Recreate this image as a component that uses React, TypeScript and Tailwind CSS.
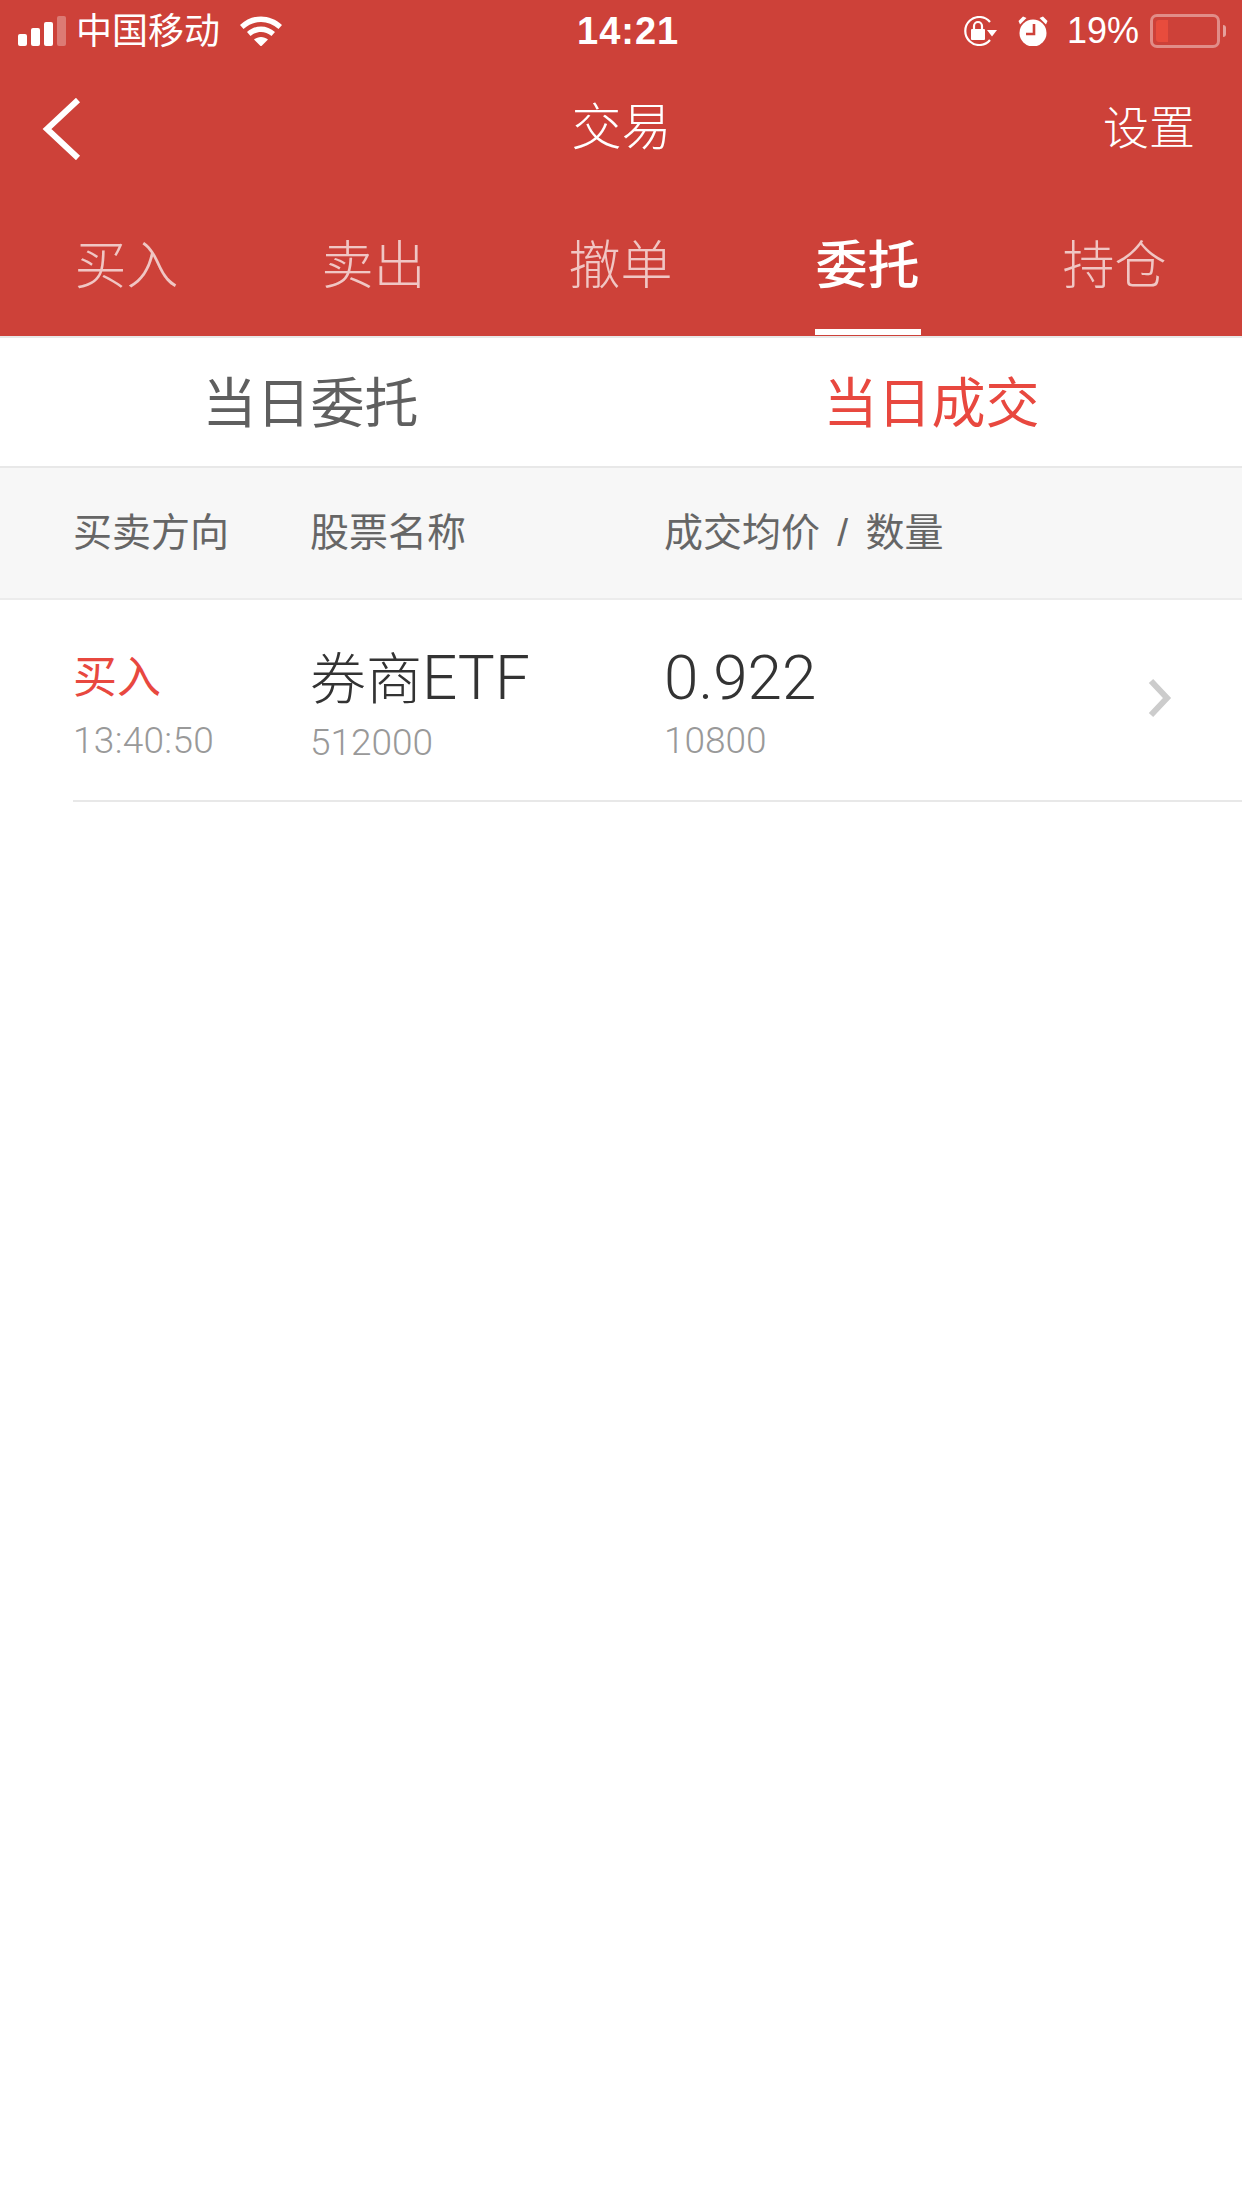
const Tabs = ["买入", "卖出", "撤单", "委托", "持仓"];

function Signal() {
  return (
    <div className="flex items-end gap-[4px] h-[30px]">
      <div className="w-[9px] h-[12px] rounded-[2px] bg-white" />
      <div className="w-[9px] h-[18px] rounded-[2px] bg-white" />
      <div className="w-[9px] h-[24px] rounded-[2px] bg-white" />
      <div className="w-[9px] h-[30px] rounded-[2px] bg-white/30" />
    </div>
  );
}

function Wifi() {
  return (
    <svg width="42" height="30" viewBox="0 0 42 30">
      <path d="M0 9 C12 -2.5 30 -2.5 42 9 L38.5 13 C28 3.5 14 3.5 3.5 13 Z" fill="#fff" />
      <path d="M7 16 C15 8.5 27 8.5 35 16 L31.5 20 C25 14.5 17 14.5 10.5 20 Z" fill="#fff" />
      <path d="M14 23.5 C18 20 24 20 28 23.5 L21 30.5 Z" fill="#fff" />
    </svg>
  );
}

function RotationLock() {
  return (
    <svg width="34" height="30" viewBox="0 0 34 30">
      <path d="M27 6 A14 14 0 1 0 27 24" fill="none" stroke="#fff" strokeWidth="2.2" />
      <path d="M24 14 L34 14 L29 20.5 Z" fill="#fff" />
      <rect x="8" y="13" width="14" height="11" rx="1" fill="#fff" />
      <path d="M11 13 V10 A4 4 0 0 1 19 10 V13" fill="none" stroke="#fff" strokeWidth="2.2" />
    </svg>
  );
}

function Alarm() {
  return (
    <svg width="30" height="30" viewBox="0 0 30 30">
      <ellipse cx="15" cy="17" rx="13.5" ry="13.5" fill="#fff" />
      <path d="M0.5 5 L5 0.5 L8.5 2 L2 8.5 Z" fill="#fff" />
      <path d="M29.5 5 L25 0.5 L21.5 2 L28 8.5 Z" fill="#fff" />
      <path d="M16 8 V18 H8" fill="none" stroke="#cd4139" strokeWidth="2.6" />
    </svg>
  );
}

function Battery() {
  return (
    <div className="flex items-center gap-[3px]">
      <div className="w-[70px] h-[34px] rounded-[7px] border-[3px] border-white/40 p-[3px] flex">
        <div className="w-[12px] h-full rounded-l-[3px] bg-[#e84c3d]" />
      </div>
      <div className="w-[3px] h-[12px] rounded-r-[3px] bg-white/50" />
    </div>
  );
}

export default function App() {
  return (
    <div className="w-[1242px] h-[2208px] bg-white flex flex-col overflow-hidden [font-family:'Liberation_Sans','Noto_Sans_CJK_SC',sans-serif]">
      <header className="bg-[#cd4139] h-[336px] flex flex-col text-white">
        <div className="h-[62px] flex items-center pl-[18px] pr-[16px]">
          <div className="w-[559px] flex items-center">
            <Signal />
            <span className="ml-[10px] pt-[2px] text-[36px] leading-[40px]">中国移动</span>
            <span className="ml-[20px] flex"><Wifi /></span>
          </div>
          <span className="w-[102px] text-center text-[38px] leading-[40px] font-bold tracking-[1px]">14:21</span>
          <div className="flex-1 flex items-center justify-end">
            <RotationLock />
            <span className="ml-[21px] flex"><Alarm /></span>
            <span className="ml-[19px] text-[36px] leading-[40px]">19%</span>
            <span className="ml-[11px] flex"><Battery /></span>
          </div>
        </div>
        <div className="h-[128px] flex items-start justify-between pt-[38px] pl-[42px] pr-[47px]">
          <svg width="40" height="62" viewBox="0 0 40 62" className="-mt-[2px]">
            <path d="M36 2 L5 31 L36 60" fill="none" stroke="#fff" strokeWidth="6" />
          </svg>
          <span className="ml-[58px] text-[50px] leading-[56px] font-light">交易</span>
          <span className="text-[46px] leading-[56px] font-light">设置</span>
        </div>
        <nav className="flex-1 flex pl-[3px]">
          {Tabs.map((t) => (
            <div key={t} className="w-[247px] flex justify-center">
              <div
                className={
                  t === "委托"
                    ? "w-[106px] h-[145px] pt-[44px] text-center text-[52px] leading-[64px] font-medium text-white border-b-[6px] border-white"
                    : "w-[106px] h-[145px] pt-[44px] text-center text-[52px] leading-[64px] font-light text-white/70"
                }
              >
                {t}
              </div>
            </div>
          ))}
        </nav>
      </header>
      <div className="h-[132px] flex border-t-2 border-b-2 border-[#e8e8e8] items-center pt-[4px]">
        <div className="w-[621px] text-center text-[54px] leading-[64px] text-[#5f5f5f]">当日委托</div>
        <div className="w-[621px] text-center text-[54px] leading-[64px] text-[#e8483f]">当日成交</div>
      </div>
      <div className="h-[132px] bg-[#f7f7f7] flex items-center border-b-2 border-[#ececec] text-[39px] leading-[48px] text-[#666666]">
        <span className="ml-[73px] w-[237px]">买卖方向</span>
        <span className="w-[354px]">股票名称</span>
        <span className="[word-spacing:6.5px]">成交均价 / 数量</span>
      </div>
      <div className="ml-[73px] h-[202px] border-b-2 border-[#e8e8e8] flex items-start pt-[50px]">
        <div className="w-[237px] flex flex-col">
          <span className="text-[44px] leading-[56px] text-[#e8483f]">买入</span>
          <span className="mt-[14px] text-[37px] leading-[42px] tracking-[0.3px] text-[#999999] font-light [font-family:Roboto,sans-serif]">13:40:50</span>
        </div>
        <div className="w-[354px] flex flex-col">
          <span className="text-[56px] leading-[56px] text-[#333333] font-light">
            券商<span className="text-[62px] font-light [font-family:Roboto,sans-serif]">ETF</span>
          </span>
          <span className="mt-[14px] text-[37px] leading-[42px] text-[#999999] font-light [font-family:Roboto,sans-serif]">512000</span>
        </div>
        <div className="flex-1 flex flex-col">
          <span className="text-[62px] leading-[56px] text-[#333333] font-light [font-family:Roboto,sans-serif]">0.922</span>
          <span className="mt-[14px] text-[37px] leading-[42px] text-[#999999] font-light [font-family:Roboto,sans-serif]">10800</span>
        </div>
        <svg width="28" height="40" viewBox="0 0 28 40" className="mt-[28px] mr-[68px]">
          <path d="M5 3 L21 20 L5 37" fill="none" stroke="#cccccc" strokeWidth="6" />
        </svg>
      </div>
    </div>
  );
}
